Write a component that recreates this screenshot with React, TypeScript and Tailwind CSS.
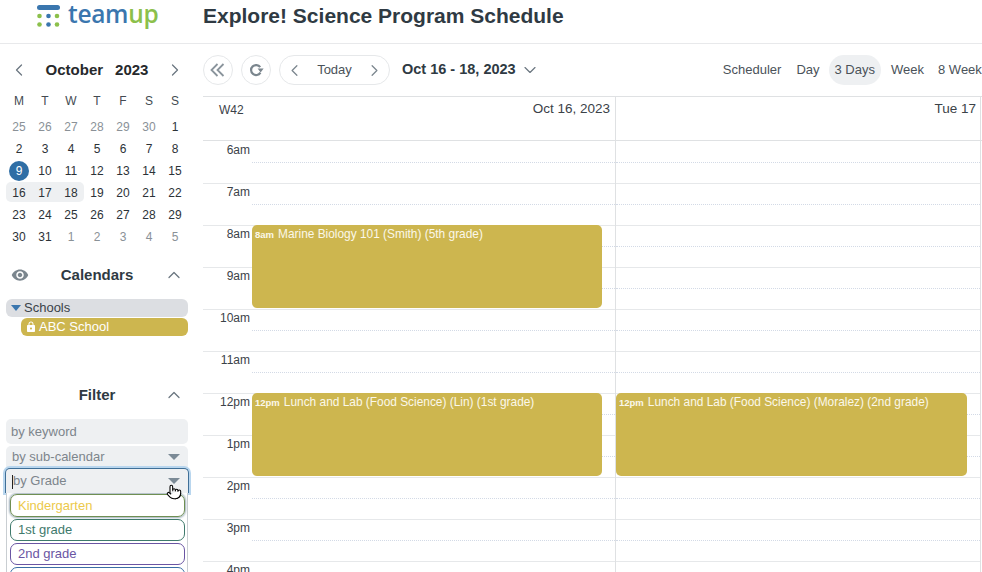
import { ChevronLeft, ChevronRight, ChevronDown, ChevronUp, Pointer } from 'lucide-react';
import { MdVisibility, MdLock } from 'react-icons/md';

const weeks = [
  ['25', '26', '27', '28', '29', '30', '1'],
  ['2', '3', '4', '5', '6', '7', '8'],
  ['9', '10', '11', '12', '13', '14', '15'],
  ['16', '17', '18', '19', '20', '21', '22'],
  ['23', '24', '25', '26', '27', '28', '29'],
  ['30', '31', '1', '2', '3', '4', '5'],
];

const hours = ['6am', '7am', '8am', '9am', '10am', '11am', '12pm', '1pm', '2pm', '3pm', '4pm'];

function Logo() {
  return (
    <div className="-mt-[11px] flex w-[203px] items-center gap-[8px] pl-[37px]">
      <svg width="23" height="23" viewBox="0 0 23 23">
        <rect x="0" y="0" width="23" height="5" rx="2.5" fill="#3a76ae" />
        <circle cx="2.5" cy="11" r="2.3" fill="#8cc04b" />
        <circle cx="11.5" cy="11" r="2.3" fill="#3a76ae" />
        <circle cx="20" cy="11" r="2.3" fill="#8cc04b" />
        <circle cx="2.5" cy="19.5" r="2.3" fill="#8cc04b" />
        <circle cx="11.5" cy="19.5" r="2.3" fill="#3a76ae" />
        <circle cx="20" cy="19.5" r="2.3" fill="#8cc04b" />
      </svg>
      <span className="-mt-[5px] font-['Open_Sans',sans-serif] text-[24.5px] font-semibold leading-[24px] tracking-[-0.3px] text-[#3a76ae]">
        team<span className="text-[#8cc04b]">up</span>
      </span>
    </div>
  );
}

function MiniCalendar() {
  return (
    <div>
      <div className="mt-[14px] flex h-[24px] w-[194px] items-center justify-between px-[9px]">
        <ChevronLeft size={20} strokeWidth={1.5} className="text-[#6b7680]" />
        <div className="flex gap-3 text-[15px] font-bold text-[#26292c]">
          <span>October</span>
          <span>2023</span>
        </div>
        <ChevronRight size={20} strokeWidth={1.5} className="text-[#6b7680]" />
      </div>
      <div className="ml-[6px] mt-[8px] grid h-[22px] w-[182px] grid-cols-7 items-center text-center text-[12px] text-[#444b52]">
        {['M', 'T', 'W', 'T', 'F', 'S', 'S'].map((d, i) => (
          <span key={i}>{d}</span>
        ))}
      </div>
      <div className="ml-[6px] mt-[4px] w-[182px]">
        {weeks.map((week, w) => (
          <div key={w} className="relative grid h-[22px] grid-cols-7 items-center text-center text-[12px] text-[#2c3237]">
            {w === 3 && <div className="absolute left-0 top-0 h-[20px] w-[78px] rounded-[5px] bg-[#eef0f2]" />}
            {week.map((day, i) => {
              const muted = (w === 0 && i < 6) || (w === 5 && i > 1);
              const isToday = w === 2 && i === 0;
              return (
                <span key={i} className={`relative ${muted ? 'text-[#8a9197]' : ''}`}>
                  {isToday ? (
                    <span className="mx-auto flex h-[20px] w-[20px] items-center justify-center rounded-full bg-[#2f6ea5] text-white">
                      {day}
                    </span>
                  ) : (
                    day
                  )}
                </span>
              );
            })}
          </div>
        ))}
      </div>
    </div>
  );
}

function SectionHead({ title, eye }: { title: string; eye?: boolean }) {
  return (
    <div className="relative flex h-[20px] w-[194px] items-center justify-center text-[15px] font-bold text-[#2f3a43]">
      {eye && <MdVisibility size={18} className="absolute left-[11px] text-[#7b868e]" />}
      <span>{title}</span>
      <ChevronUp size={20} strokeWidth={1.5} className="absolute right-[10px] text-[#6b7680]" />
    </div>
  );
}

function Sidebar() {
  return (
    <aside className="w-[203px] shrink-0">
      <MiniCalendar />
      <div className="mt-[17px]">
        <SectionHead title="Calendars" eye />
      </div>
      <div className="ml-[6px] mt-[14px] w-[182px]">
        <div className="flex h-[18px] items-center rounded-[6px] bg-[#dcdee2] text-[13px] text-[#3a4249]">
          <span className="ml-[5px] mr-[3px] h-0 w-0 border-x-[5px] border-t-[6px] border-x-transparent border-t-[#3a76ae]" />
          Schools
        </div>
        <div className="ml-[15px] mt-[1px] flex h-[18px] items-center rounded-[6px] bg-[#cdb64f] text-[13px] text-white">
          <MdLock size={12} className="ml-[4px] mr-[2px]" />
          ABC School
        </div>
      </div>
      <div className="mt-[49px]">
        <SectionHead title="Filter" />
      </div>
      <div className="relative ml-[6px] mt-[14px] w-[182px] text-[13px] text-[#7d858c]">
        <div className="flex h-[25px] items-center rounded-[5px] bg-[#eef0f2] pl-[5px] pt-[1px]">by keyword</div>
        <div className="mt-[2px] flex h-[22px] items-center justify-between rounded-t-[5px] bg-[#eef0f2] pl-[6px] pr-[8px]">
          by sub-calendar
          <span className="h-0 w-0 border-x-[6px] border-t-[6px] border-x-transparent border-t-[#7b8a96]" />
        </div>
        <div className="relative z-10 -ml-[1px] flex h-[25px] w-[184px] items-center justify-between rounded-t-[5px] border border-b-0 border-[#3f6f97] bg-[#eef0f2] pl-[6px] pr-[8px] shadow-[0_0_0_2px_#b9d6ee]">
          <span>
            <span className="inline-block h-[14px] w-px bg-[#222] align-middle" />
            by Grade
          </span>
          <span className="h-0 w-0 border-x-[6px] border-t-[6px] border-x-transparent border-t-[#7b8a96]" />
        </div>
        <div className="relative z-20 flex h-[80px] flex-col gap-[2px] overflow-hidden border-x border-[#c9ced2] bg-white pl-[3px] pr-[2px] pt-[1px]">
          <div className="flex h-[23px] shrink-0 items-center rounded-[7px] border border-[#6f8f52] pl-[7px] text-[#ecc94b] shadow-[0_0_2px_1px_#9fb0bb]">Kindergarten</div>
          <div className="flex h-[22px] shrink-0 items-center rounded-[7px] border border-[#3f7a6c] pl-[7px] text-[#3f7a6c]">1st grade</div>
          <div className="flex h-[22px] shrink-0 items-center rounded-[7px] border border-[#6a55a3] pl-[7px] text-[#6a55a3]">2nd grade</div>
          <div className="flex h-[22px] shrink-0 items-center rounded-[7px] border border-[#3a6ea5] pl-[7px]" />
        </div>
        {/* mouse pointer caught in the capture */}
        <Pointer size={16} strokeWidth={1.6} fill="white" className="absolute left-[160px] top-[65px] z-30 text-black" />
      </div>
    </aside>
  );
}

function Toolbar() {
  return (
    <div className="flex h-[52px] items-center justify-between text-[13px] text-[#4a5259]">
      <div className="flex items-center">
        <button className="flex h-[30px] w-[30px] items-center justify-center rounded-full border border-[#e6e8ea] text-[#8a949c]">
          <svg width="16" height="14" viewBox="0 0 16 14" fill="none" stroke="currentColor" strokeWidth="1.8">
            <path d="M7.5 1 L1.5 7 L7.5 13" />
            <path d="M13.5 1 L7.5 7 L13.5 13" />
          </svg>
        </button>
        <button className="ml-[8px] flex h-[30px] w-[30px] items-center justify-center rounded-full border border-[#e6e8ea] text-[#7b868e]">
          <svg width="15" height="14" viewBox="0 0 15 14" fill="none">
            <path d="M11.2 4.2 A5 5 0 1 0 11.4 9.6" stroke="currentColor" strokeWidth="2.2" />
            <path d="M8.6 5.6 L14.6 5.6 L11.6 9.4 Z" fill="currentColor" />
          </svg>
        </button>
        <div className="ml-[8px] flex h-[30px] w-[111px] items-center justify-between rounded-full border border-[#e6e8ea] px-[5px]">
          <ChevronLeft size={19} strokeWidth={1.6} className="text-[#7b868e]" />
          <span>Today</span>
          <ChevronRight size={19} strokeWidth={1.6} className="text-[#7b868e]" />
        </div>
        <span className="ml-[12px] text-[14.5px] font-bold text-[#2f3a43]">Oct 16 - 18, 2023</span>
        <ChevronDown size={20} strokeWidth={1.4} className="ml-[4px] text-[#6b7680]" />
      </div>
      <div className="flex items-center whitespace-nowrap">
        <span>Scheduler</span>
        <span className="ml-[15px]">Day</span>
        <span className="ml-[9px] flex h-[30px] items-center rounded-full bg-[#eef0f2] px-[6px]">3 Days</span>
        <span className="ml-[10px]">Week</span>
        <span className="ml-[14px] w-[44px] overflow-hidden">8 Week</span>
      </div>
    </div>
  );
}

function EventBlock({ time, title, top }: { time: string; title: string; top: string }) {
  return (
    <div className={`absolute left-0 right-[13px] ${top} h-[83px] rounded-[5px] bg-[#cdb64f] px-[3px] py-[2px] text-[11.9px] leading-[14px] text-[#fbf8ea]`}>
      <span className="mr-[4px] text-[9.5px] font-bold">{time}</span>
      {title}
    </div>
  );
}

function DayColumn({ children, width }: { children?: React.ReactNode; width: string }) {
  return (
    <div className={`relative ${width} border-r border-[#dfe1e3]`}>
      {hours.map((h, i) => (
        <div key={h} className={`${i === 0 ? 'h-[43px]' : 'h-[42px]'} border-b border-[#e6e8ea]`}>
          <div className={`${i === 0 ? 'h-[22px]' : 'h-[21px]'} border-b border-dotted border-[#d3dae6]`} />
        </div>
      ))}
      {children}
    </div>
  );
}

function Grid() {
  return (
    <div className="border-t border-[#dfe1e3]">
      <div className="flex h-[44px] border-b border-[#dfe1e3] text-[#3b4248]">
        <div className="w-[49px] shrink-0 pl-[16px] pt-[6px] text-[12px] leading-[14px]">W42</div>
        <div className="w-[364px] border-r border-[#dfe1e3] pr-[5px] pt-[4px] text-right text-[13.5px] leading-[16px]">Oct 16, 2023</div>
        <div className="w-[365px] border-r border-[#dfe1e3] pr-[4px] pt-[4px] text-right text-[13.5px] leading-[16px]">Tue 17</div>
      </div>
      <div className="flex">
        <div className="w-[49px] shrink-0 text-[12px] text-[#3b4248]">
          {hours.map((h, i) => (
            <div key={h} className={`${i === 0 ? 'h-[43px] pt-[2px]' : 'h-[42px] pt-[1px]'} border-b border-[#e6e8ea] pr-[2px] text-right leading-[14px]`}>
              {h}
            </div>
          ))}
        </div>
        <DayColumn width="w-[364px]">
          <EventBlock top="top-[84px]" time="8am" title="Marine Biology 101 (Smith) (5th grade)" />
          <EventBlock top="top-[252px]" time="12pm" title="Lunch and Lab (Food Science) (Lin) (1st grade)" />
        </DayColumn>
        <DayColumn width="w-[365px]">
          <EventBlock top="top-[252px]" time="12pm" title="Lunch and Lab (Food Science) (Moralez) (2nd grade)" />
        </DayColumn>
      </div>
    </div>
  );
}

export default function App() {
  return (
    <div className="h-[572px] w-[982px] overflow-hidden bg-white font-['Liberation_Sans',Arial,sans-serif]">
      <header className="flex h-[44px] items-center border-b border-[#e8e9eb]">
        <Logo />
        <h1 className="-mt-[12px] text-[21px] font-bold text-[#2f3a43]">Explore! Science Program Schedule</h1>
      </header>
      <div className="flex">
        <Sidebar />
        <main className="w-[779px]">
          <Toolbar />
          <Grid />
        </main>
      </div>
    </div>
  );
}
